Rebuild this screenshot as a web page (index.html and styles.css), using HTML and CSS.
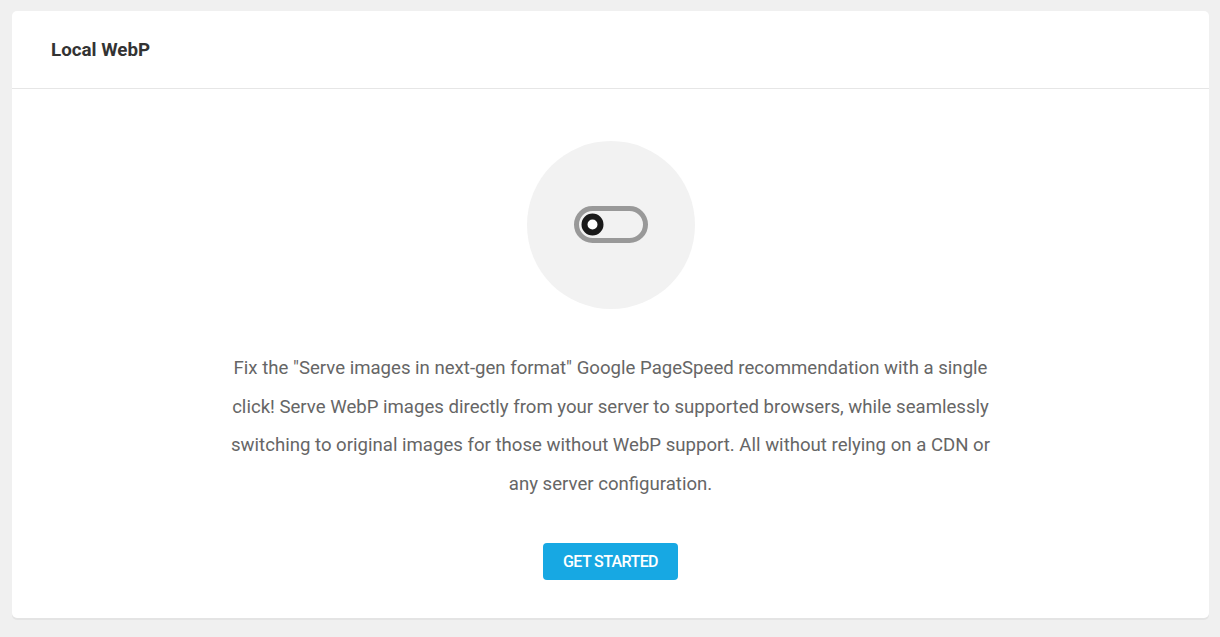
FILE: index.html
```html
<!DOCTYPE html>
<html lang="en">
<head>
  <meta charset="UTF-8" />
  <title>Local WebP</title>
  <meta name="viewport" content="width=device-width, initial-scale=1.0" />
  <link rel="stylesheet" href="styles.css">
</head>
<body>
  <div class="box">
    <div class="box-header">
      <h2 class="box-title">Local WebP</h2>
    </div>
    <div class="box-body">
      <div class="icon-circle">
        <svg width="80" height="44" viewBox="0 0 80 44" aria-hidden="true">
          <rect x="4.5" y="5.5" width="69" height="32" rx="16" fill="none" stroke="#999" stroke-width="5" />
          <circle cx="20.5" cy="21.5" r="8" fill="#fff" stroke="#1a1a1a" stroke-width="6" />
        </svg>
      </div>
      <p class="description">
        Fix the "Serve images in next-gen format" Google PageSpeed recommendation with a single
        click! Serve WebP images directly from your server to supported browsers, while seamlessly
        switching to original images for those without WebP support. All without relying on a CDN or
        any server configuration.
      </p>
      <button class="btn-blue">Get started</button>
    </div>
  </div>
</body>
</html>
```

FILE: styles.css
```css
body {
  margin: 0;
  padding: 11px 11px 18px 12px;
  background-color: #f0f0f0;
  font-family: Roboto, Arial, sans-serif;
}

.box {
  background: #fff;
  border-radius: 5px;
  box-shadow: 0 2px 0 #e4e4e4;
}

.box-header {
  height: 77px;
  display: flex;
  align-items: center;
  padding: 0 39px;
  border-bottom: 1px solid #e6e6e6;
}

.box-title {
  margin: 0;
  font-size: 18.75px;
  font-weight: 700;
  color: #333;
}

.box-body {
  display: flex;
  flex-direction: column;
  align-items: center;
  padding: 52px 30px 38px;
}

.icon-circle {
  width: 168px;
  height: 168px;
  border-radius: 50%;
  background: #f2f2f2;
  display: flex;
  align-items: center;
  justify-content: center;
}

.icon-circle svg {
  margin-left: 2px;
}

.description {
  max-width: 766px;
  margin: 40px 0 39px;
  font-size: 18.6px;
  line-height: 38.7px;
  color: #666;
  text-align: center;
}

.btn-blue {
  height: 37px;
  padding: 0 20px;
  border: none;
  border-radius: 4px;
  background: #17a8e3;
  color: #fff;
  font-family: Roboto, Arial, sans-serif;
  font-size: 16px;
  font-weight: 500;
  letter-spacing: -0.6px;
  text-transform: uppercase;
  cursor: pointer;
}
```
